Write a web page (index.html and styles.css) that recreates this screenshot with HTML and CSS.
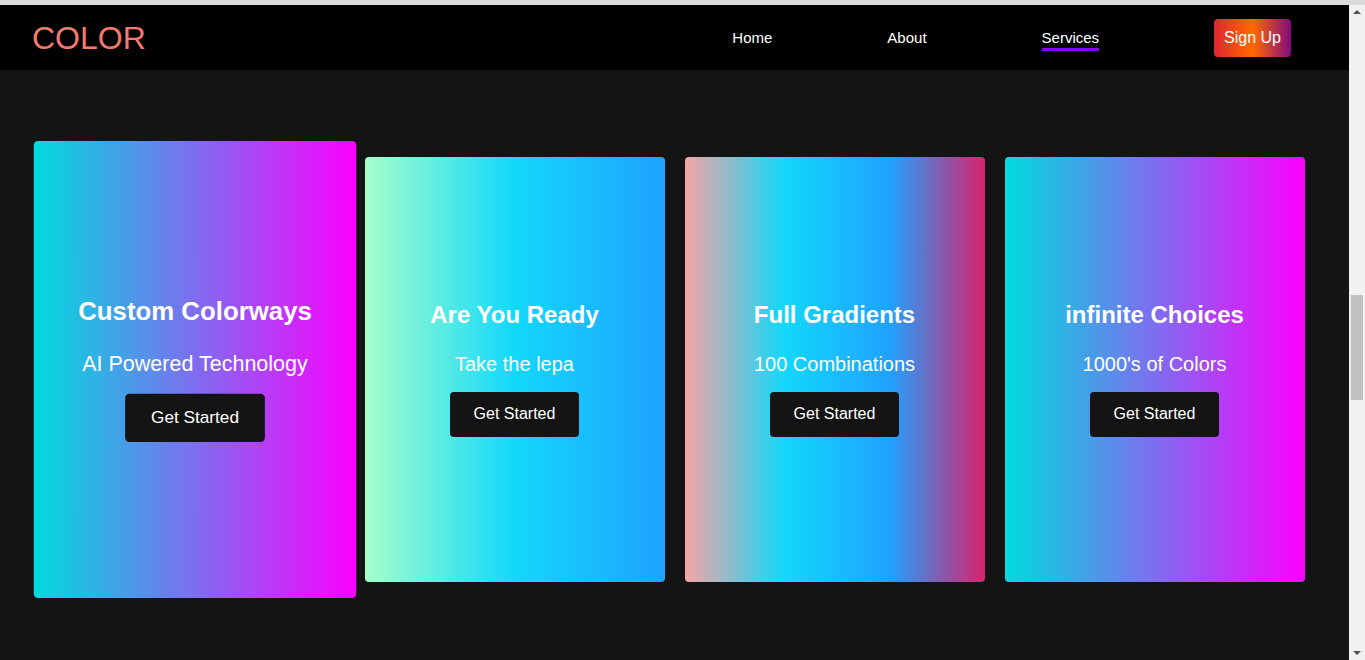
FILE: index.html
```html
<!DOCTYPE html>
<html lang="en">
<head>
<meta charset="utf-8">
<title>COLOR</title>
<link rel="stylesheet" href="styles.css">
</head>
<body>
<div class="topstrip"></div>
<div class="frame">
  <div class="page">
    <header class="nav">
      <div class="logo">COLOR</div>
      <ul class="links">
        <li><a href="#">Home</a></li>
        <li><a href="#">About</a></li>
        <li><a href="#" class="active">Services</a></li>
        <li><a href="#" class="signup">Sign Up</a></li>
      </ul>
    </header>
    <main class="cards">
      <div class="card c1 hovered">
        <h2>Custom Colorways</h2>
        <p>AI Powered Technology</p>
        <button class="btn">Get Started</button>
      </div>
      <div class="card c2">
        <h2>Are You Ready</h2>
        <p>Take the lepa</p>
        <button class="btn">Get Started</button>
      </div>
      <div class="card c3">
        <h2>Full Gradients</h2>
        <p>100 Combinations</p>
        <button class="btn">Get Started</button>
      </div>
      <div class="card c1">
        <h2>infinite Choices</h2>
        <p>1000's of Colors</p>
        <button class="btn">Get Started</button>
      </div>
    </main>
  </div>
  <div class="scrollbar">
    <div class="arrow up"></div>
    <div class="track"><div class="thumb"></div></div>
    <div class="arrow down"></div>
  </div>
</div>
</body>
</html>
```
FILE: styles.css
```css
* { box-sizing: border-box; }
html, body { margin: 0; padding: 0; height: 100%; overflow: hidden; }
body {
  font-family: "Liberation Sans", Arial, sans-serif;
  background: #141414;
  display: flex;
  flex-direction: column;
}
.topstrip { height: 5px; background: #dcdcdc; flex: none; }
.frame { flex: 1; display: flex; min-height: 0; }
.page { flex: 1; background: #141414; display: flex; flex-direction: column; }

.nav {
  height: 65px;
  background: #000;
  display: flex;
  align-items: center;
  justify-content: space-between;
  padding: 0 58px 0 32px;
}
.logo { color: #f7786d; font-size: 32px; line-height: 1; margin-top: 0; }
.links { list-style: none; display: flex; align-items: center; margin: 0; padding: 0; gap: 115px; }
.links a { color: #fff; text-decoration: none; font-size: 15px; display: inline-block; }
.links a.active { position: relative; }
.links a.active::after {
  content: ""; position: absolute; left: 0; right: 0; bottom: -5px; height: 3px; background: #8a00ff;
}
.links a.signup {
  font-size: 16px;
  padding: 10px 10px;
  line-height: 18px;
  border-radius: 4px;
  background: linear-gradient(to right, #de2630, #ff6a00 50%, #820a7c);
}

.cards {
  display: flex;
  justify-content: center;
  gap: 20px;
  padding-top: 87px;
}
.card {
  width: 300px;
  height: 425px;
  border-radius: 4px;
  display: flex;
  flex-direction: column;
  align-items: center;
  justify-content: center;
  color: #fff;
  padding-bottom: 2px;
}
.card.hovered { transform: scale(1.075); }
.c1 { background: linear-gradient(to right, #00dbde, #fc00ff); }
.c2 { background: linear-gradient(to right, #a6ffcb, #12d8fa 50%, #1fa2ff); }
.c3 { background: linear-gradient(to right, #f6a5a5, #12d8fa 33%, #1fa2ff 68%, #d9226d); }
.card h2 { margin: 0 0 24px; font-size: 24px; line-height: 28px; font-weight: bold; }
.card p { margin: 0 0 16px; font-size: 20px; line-height: 23px; }
.btn {
  font-family: inherit;
  font-size: 16px;
  line-height: 18px;
  color: #fff;
  background: #141414;
  border: none;
  border-radius: 4px;
  padding: 13px 24px 14px;
}

.scrollbar { width: 16px; background: #f1f1f1; display: flex; flex-direction: column; align-items: center; flex: none; }
.arrow { width: 0; height: 0; border-left: 4px solid transparent; border-right: 4px solid transparent; margin: 6px 0; }
.arrow.up { border-bottom: 4px solid #505050; margin-top: 5px; }
.arrow.down { border-top: 4px solid #505050; margin-bottom: 5px; }
.track { flex: 1; width: 100%; display: flex; flex-direction: column; align-items: center; padding-top: 275px; }
.thumb { width: 12px; height: 105px; background: #c1c1c1; }
```
